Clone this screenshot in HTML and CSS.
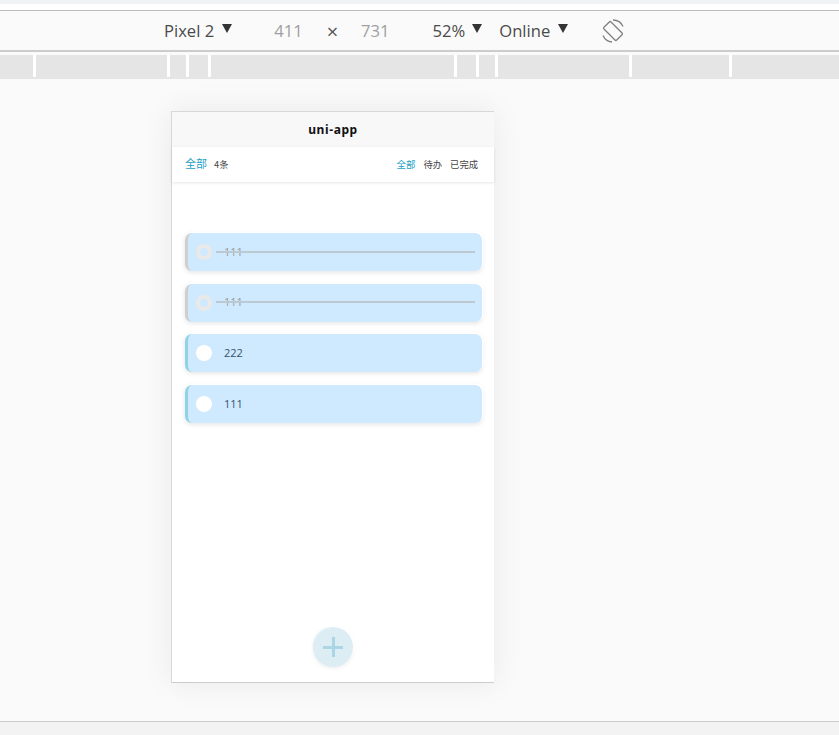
FILE: index.html
```html
<!DOCTYPE html>
<html lang="zh">

<head>
    <meta charset="UTF-8">
    <meta name="viewport" content="width=device-width, initial-scale=1.0">
    <title>uni-app</title>
    <link rel="stylesheet" href="styles.css">
</head>

<body>
    <div class="top-strip"></div>
    <div class="toolbar">
        <span class="tool tool-device">Pixel 2<i class="caret"></i></span>
        <span class="size size-w">411</span>
        <span class="times">×</span>
        <span class="size size-h">731</span>
        <span class="tool tool-zoom">52%<i class="caret"></i></span>
        <span class="tool tool-net">Online<i class="caret"></i></span>
        <svg class="rotate" width="24" height="24" viewBox="0 0 24 24" fill="none" stroke="#808080" stroke-width="1.3">
            <rect x="7" y="3" width="10" height="18" rx="1.2" transform="rotate(-45 12 12)"/>
            <path d="M12 1A11 11 0 0 1 22 7.5"/>
            <path d="M11 23A11 11 0 0 1 2 16.5"/>
        </svg>
    </div>
    <div class="ruler">
        <div></div><div></div><div></div><div></div><div></div>
        <div></div><div></div><div></div><div></div><div></div>
    </div>

    <div class="viewport">
        <div class="device">
            <div class="nav-title">uni-app</div>
            <div class="filter-bar">
                <div class="filter-left">
                    <span class="active">全部</span>
                    <span>4条</span>
                </div>
                <div class="filter-right">
                    <span class="active">全部</span>
                    <span>待办</span>
                    <span>已完成</span>
                </div>
            </div>
            <div class="todo-list">
                <div class="todo-item done">
                    <span class="check"></span>
                    <span class="todo-text">111</span>
                </div>
                <div class="todo-item done">
                    <span class="check"></span>
                    <span class="todo-text">111</span>
                </div>
                <div class="todo-item">
                    <span class="check"></span>
                    <span class="todo-text">222</span>
                </div>
                <div class="todo-item">
                    <span class="check"></span>
                    <span class="todo-text">111</span>
                </div>
            </div>
            <div class="add-btn"><span class="plus"></span></div>
        </div>
    </div>
    <div class="bottom-bar"></div>
</body>

</html>
```
FILE: styles.css
```css
body {
    margin: 0;
    height: 735px;
    overflow: hidden;
    background-color: #fafafa;
    font-family: "Open Sans", Arial, sans-serif;
    display: flex;
    flex-direction: column;
}

.top-strip {
    height: 4px;
    background-color: #f1f3f4;
    border-bottom: 6px solid #ffffff;
}

.toolbar {
    height: 39px;
    border-top: 1px solid #bbbbbb;
    border-bottom: 2px solid #cccccc;
    background-color: #fafafa;
    display: flex;
    align-items: center;
    font-size: 16.6px;
    color: #4a4a4a;
    flex-shrink: 0;
}

.tool {
    display: flex;
    align-items: center;
    white-space: nowrap;
}

.caret {
    width: 0;
    height: 0;
    margin-left: 7px;
    margin-top: -4px;
    border-left: 5.5px solid transparent;
    border-right: 5.5px solid transparent;
    border-top: 9px solid #333333;
}

.tool-device {
    margin-left: 164px;
}

.tool-device .caret {
    margin-left: 8px;
}

.size {
    color: #a0a0a0;
}

.size-w {
    margin-left: 42px;
}

.times {
    margin-left: 24px;
    font-size: 20px;
    color: #555555;
    line-height: 1;
    margin-top: 3px;
}

.size-h {
    margin-left: 23px;
}

.tool-zoom {
    margin-left: 43px;
}

.tool-net {
    margin-left: 17px;
}

.tool-net .caret {
    margin-left: 8px;
}

.rotate {
    margin-left: 33px;
}

.ruler {
    margin-top: 3px;
    height: 24px;
    background-color: #ffffff;
    border-bottom: 2px solid #e5e5e5;
    box-sizing: border-box;
    display: grid;
    grid-template-columns: 33px 131px 16px 19px 243px 19px 16px 131px 97px 1fr;
    column-gap: 3px;
    flex-shrink: 0;
}

.ruler div {
    background-color: #e5e5e5;
}

.viewport {
    height: 642px;
    padding: 32px 0 0 171px;
    box-sizing: border-box;
    flex-shrink: 0;
}

.device {
    position: relative;
    width: 323px;
    height: 572px;
    box-sizing: border-box;
    background-color: #ffffff;
    border-top: 1px solid #d8d8d8;
    border-left: 1px solid #d8d8d8;
    border-bottom: 1px solid #cccccc;
    box-shadow: 0 0 30px rgba(0, 0, 0, 0.07);
}

.nav-title {
    height: 35px;
    line-height: 35px;
    background-color: #f8f8f8;
    text-align: center;
    font-family: "Noto Sans", Arial, sans-serif;
    font-size: 12px;
    font-weight: bold;
    letter-spacing: 0.6px;
    color: #111111;
}

.filter-bar {
    height: 35px;
    display: flex;
    justify-content: space-between;
    align-items: center;
    padding: 0 16px 0 13px;
    background-color: #ffffff;
    box-shadow: 0 1px 3px rgba(0, 0, 0, 0.1);
    font-family: "Noto Sans CJK SC", sans-serif;
    font-size: 9.3px;
    line-height: 1;
    color: #444444;
}

.filter-left {
    display: flex;
    align-items: center;
    gap: 7px;
}

.filter-left span {
    margin-top: 1px;
}

.filter-left .active {
    font-size: 11px;
    margin-top: -1px;
}

.filter-right {
    display: flex;
    align-items: center;
    gap: 8px;
    margin-top: 1px;
}

.active {
    color: #1f9fc4;
}

.filter-right .active {
    font-size: 9.5px;
}

.todo-list {
    padding: 51px 12px 0 13px;
    display: flex;
    flex-direction: column;
    gap: 12.7px;
}

.todo-item {
    position: relative;
    height: 38px;
    display: flex;
    align-items: center;
    box-sizing: border-box;
    padding-left: 8px;
    background-color: #cfe9ff;
    border-left: 3px solid #8fd3e8;
    border-radius: 7px;
    box-shadow: 1px -1px 0 0.5px #ffffff, 0 1px 4px 1px rgba(0, 0, 0, 0.09);
    font-size: 11px;
    color: #33526e;
}

.check {
    width: 16px;
    height: 16px;
    border-radius: 50%;
    background-color: #ffffff;
    box-sizing: border-box;
}

.todo-text {
    margin-left: 12px;
    margin-top: -2px;
}

.done {
    border-left-color: #cfcfcf;
}

.done .check {
    background-color: #cfe9ff;
    border: 4px solid #e9e9e9;
}

.done .todo-text {
    color: #9a9a9a;
}

/* strike line across the whole row */
.done::after {
    content: "";
    position: absolute;
    left: 28px;
    right: 7px;
    top: 17.5px;
    height: 2px;
    background-color: #bcc9d2;
}

.add-btn {
    position: absolute;
    left: 141px;
    bottom: 15px;
    width: 40px;
    height: 40px;
    border-radius: 50%;
    background-color: #dcedf4;
    box-shadow: 1px -1px 0 #ffffff, 0 1px 4px rgba(0, 0, 0, 0.08);
    display: flex;
    align-items: center;
    justify-content: center;
}

.plus {
    position: relative;
    width: 20px;
    height: 3px;
    background-color: #aad6e6;
}

.plus::after {
    content: "";
    position: absolute;
    left: 8.5px;
    top: -8.5px;
    width: 3px;
    height: 20px;
    background-color: #aad6e6;
}

.bottom-bar {
    flex: 1;
    border-top: 1px solid #cccccc;
    background-color: #f3f3f3;
}
```
